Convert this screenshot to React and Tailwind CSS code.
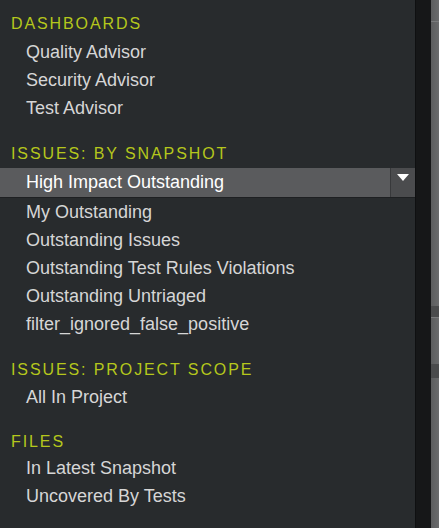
import React from "react";

const font = { fontFamily: '"Liberation Sans", Arial, sans-serif' };

function Header({ children }) {
  return (
    <div className="h-7 flex items-center pt-[3px] pl-[11px] text-[16px] tracking-[1.9px] text-[#b5c71c] uppercase">
      {children}
    </div>
  );
}

function Item({ children }) {
  return (
    <div className="h-7 flex items-center pl-[26px] text-[18px] text-[#d6d6d6] whitespace-nowrap">
      {children}
    </div>
  );
}

function Selected({ children }) {
  return (
    <div className="h-[30px] flex items-stretch bg-[#5a5b5d] border-b border-[#1e2022]">
      <div className="flex-1 flex items-center pl-[26px] text-[18px] text-white">{children}</div>
      <div className="w-[25px] bg-[#4b4c4e] border-l border-[#38393b] flex items-start justify-center pt-[6px]">
        <svg width="12" height="7" viewBox="0 0 12 7">
          <polygon points="0,0 12,0 6,7" fill="#ffffff" />
        </svg>
      </div>
    </div>
  );
}

export default function App() {
  return (
    <div className="w-[439px] h-[528px] flex bg-[#282b2d] overflow-hidden" style={font}>
      <div className="w-[415px] flex flex-col pt-2">
        <Header>Dashboards</Header>
        <div className="mt-[2px]">
          <Item>Quality Advisor</Item>
          <Item>Security Advisor</Item>
          <Item>Test Advisor</Item>
        </div>
        <div className="mt-4">
          <Header>Issues: By Snapshot</Header>
        </div>
        <div className="mt-[2px]">
          <Selected>High Impact Outstanding</Selected>
          <Item>My Outstanding</Item>
          <Item>Outstanding Issues</Item>
          <Item>Outstanding Test Rules Violations</Item>
          <Item>Outstanding Untriaged</Item>
          <Item>filter_ignored_false_positive</Item>
        </div>
        <div className="mt-4">
          <Header>Issues: Project Scope</Header>
        </div>
        <div className="mt-px">
          <Item>All In Project</Item>
        </div>
        <div className="mt-[15px]">
          <Header>Files</Header>
        </div>
        <div>
          <Item>In Latest Snapshot</Item>
          <Item>Uncovered By Tests</Item>
        </div>
      </div>
      <div className="w-[16px] bg-[#161718] border-l border-[#0f1011]" />
      <div className="flex-1 bg-gradient-to-r from-[#5c5d5e] to-[#6a6b6c] flex flex-col">
        <div className="h-[22px] border-b border-[#7a7b7c]" />
        <div className="h-[284px]" />
        <div className="h-[12px] bg-[#4a4b4c] border-b border-[#7a7b7c]" />
        <div className="h-[46px]" />
        <div className="h-[14px] bg-[#4a4b4c]" />
      </div>
    </div>
  );
}
